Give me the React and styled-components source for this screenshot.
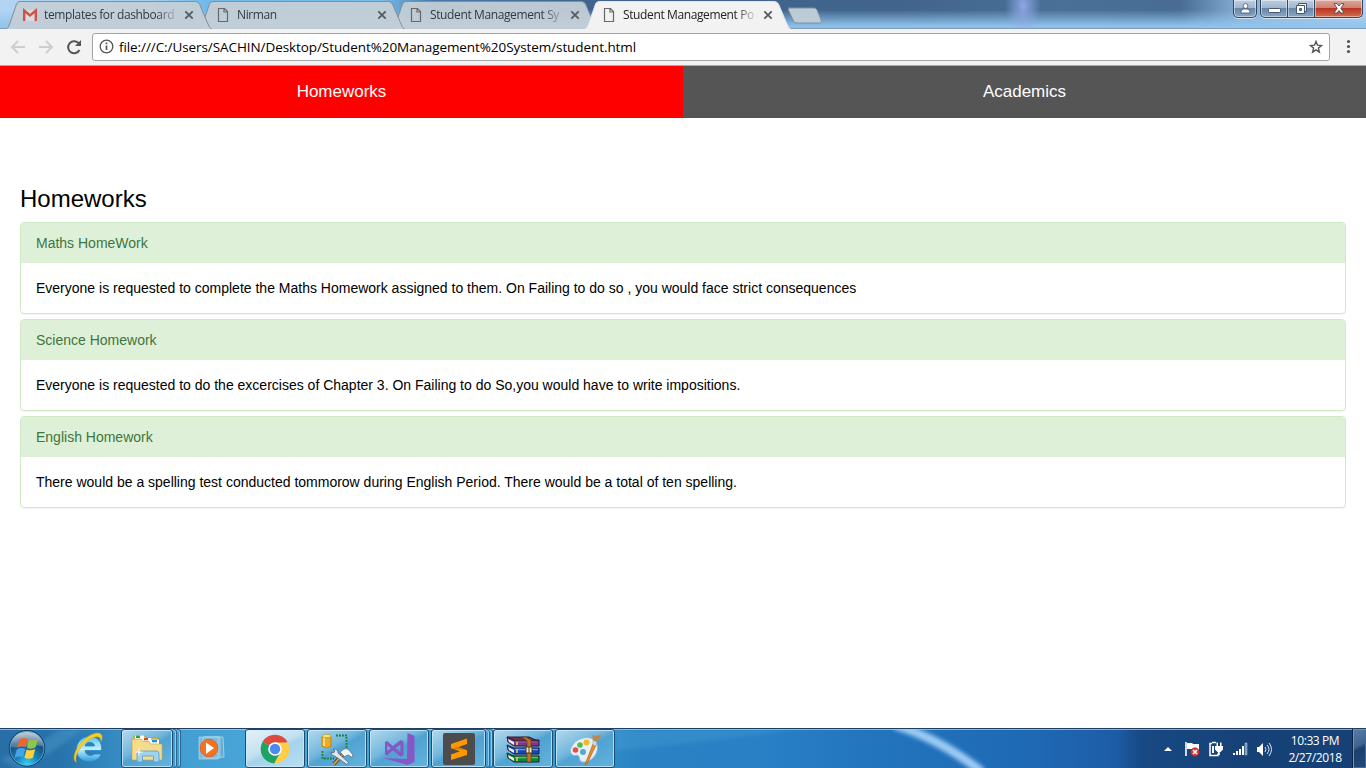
import React from "react";
import styled, { createGlobalStyle, css } from "styled-components";

const uiFont = '"Open Sans", "Noto Sans", sans-serif';

const GlobalStyle = createGlobalStyle`
  * { box-sizing: border-box; }
  body { margin: 0; background: #fff; overflow: hidden; }
`;

const Screen = styled.div`
  width: 1366px;
  height: 768px;
  display: flex;
  flex-direction: column;
  background: #fff;
  font-family: "Liberation Sans", Arial, sans-serif;
`;

/* ---------- Browser frame ---------- */

const TitleBar = styled.header`
  height: 29px;
  flex: none;
  display: flex;
  align-items: flex-start;
  padding-left: 5px;
  border-bottom: 1px solid #7f9cba;
  background:
    radial-gradient(ellipse 18px 32px at 1023px 6px, rgba(146, 170, 232, 0.95), transparent),
    linear-gradient(to bottom, transparent 35%, rgba(146, 196, 236, 0.95) 92%),
    linear-gradient(to right, #b3d4f2 0, #a3d0f4 150px, #72baeb 205px, #78bdec 380px, #4a7dab 430px, #3f658f 590px,
      #41648b 900px, #4a7098 1060px, #486c94 1180px, #86aed4 1240px, #b5d5ee 1366px);
`;

const TabItem = styled.div`
  position: relative;
  flex: none;
  width: 207px;
  height: ${(p) => (p.$active ? 29 : 28)}px;
  margin-right: -14px;
  padding: 1px 15px 0 17px;
  display: flex;
  align-items: center;
  z-index: ${(p) => p.$level};
`;

const TabShape = styled.svg`
  position: absolute;
  inset: 0;
  z-index: -1;
`;

const TabTitle = styled.span`
  width: 133px;
  margin-left: 6px;
  white-space: nowrap;
  font: 12px/18px ${uiFont};
  letter-spacing: -0.38px;
  color: ${(p) => (p.$active ? "#222" : "#303a44")};
  mask-image: linear-gradient(to right, #000 112px, rgba(0, 0, 0, 0.15) 132px);
`;

const TabIcon = styled.svg`
  flex: none;
  width: 16px;
  height: 16px;
`;

const CloseMark = styled.svg`
  flex: none;
  width: 10px;
  height: 10px;
  margin-left: 7px;
`;

const NewTab = styled.svg`
  flex: none;
  margin: 7px 0 0 10px;
`;

const WindowControls = styled.div`
  display: flex;
  margin-left: auto;
  padding-right: 3px;
  height: 19px;
`;

const ControlButton = styled.span`
  display: flex;
  flex: none;
  align-items: center;
  justify-content: center;
  width: ${(p) => p.$width}px;
  height: 18px;
  padding-bottom: ${(p) => p.$lift ?? 1}px;
  border: 1px solid #34475e;
  border-top: 0;
  border-left-width: ${(p) => (p.$joined ? 0 : 1)}px;
  border-radius: ${(p) => p.$radius || 0};
  margin-right: ${(p) => p.$gap || 0}px;
  box-shadow: inset 0 0 0 1px rgba(255, 255, 255, 0.45), 0 1px 0 rgba(255, 255, 255, 0.6);
  background: ${(p) =>
    p.$danger
      ? "linear-gradient(#dca89c 0, #cf8072 45%, #b93622 50%, #d56b50 100%)"
      : "linear-gradient(#bdcfe1 0, #9fb7cf 45%, #6887a8 50%, #89a8c8 100%)"};
`;

const Toolbar = styled.div`
  height: 37px;
  flex: none;
  display: flex;
  align-items: center;
  padding: 0 0 1px 9px;
  background: #f2f2f2;
  border-bottom: 1px solid #aaa;
`;

const NavIcon = styled.svg`
  flex: none;
  width: 18px;
  height: 18px;
  margin-right: 10px;
`;

const AddressBar = styled.div`
  display: flex;
  align-items: center;
  width: 1238px;
  height: 28px;
  margin-left: -1px;
  padding: 0 6px;
  background: #fff;
  border: 1px solid #a5a5a5;
  border-radius: 3px;
`;

const Address = styled.span`
  margin-left: 5px;
  flex: 1;
  white-space: nowrap;
  font: 13.5px/20px ${uiFont};
  letter-spacing: -0.08px;
  color: #000;
`;

const MenuDots = styled.svg`
  margin-left: 16px;
`;

/* ---------- Page ---------- */

const PageTabs = styled.nav`
  display: flex;
  flex: none;
  height: 52px;
`;

const PageTab = styled.button`
  flex: 1;
  border: 0;
  padding: 0;
  background: ${(p) => (p.$active ? "#ff0000" : "#555555")};
  color: #fff;
  font: 17px "Liberation Sans", Arial, sans-serif;
`;

const Content = styled.main`
  flex: 1;
  padding: 67px 20px 0;
  color: #000;
`;

const Heading = styled.h3`
  margin: 0 0 10px;
  font-size: 24px;
  font-weight: 400;
  line-height: 27px;
`;

const Panel = styled.section`
  margin-bottom: 5px;
  border: 1px solid #d0e9c6;
  border-radius: 4px;
  box-shadow: 0 1px 1px rgba(0, 0, 0, 0.05);
  font-size: 14px;
  line-height: 20px;
`;

const PanelHeading = styled.div`
  padding: 10px 15px;
  background: #dff0d8;
  color: #3c763d;
  border-radius: 3px 3px 0 0;
`;

const PanelBody = styled.div`
  padding: 15px;
`;

/* ---------- Taskbar ---------- */

const Taskbar = styled.footer`
  position: relative;
  z-index: 0;
  height: 40px;
  flex: none;
  display: flex;
  align-items: flex-start;
  border-top: 1px solid #203f60;
  box-shadow: inset 0 1px 0 rgba(160, 210, 245, 0.75);
  background: linear-gradient(to right, #286fa8 0, #2873ac 60px, #3489c0 110px, #44a0d3 190px, #4ba9da 300px,
    #3c9bd2 550px, #2a82c3 640px, #2980c5 760px, #2274bd 880px, #1f69b4 1030px, #1d5da7 1115px, #174983 1142px,
    #164176 1250px, #174176 1366px);
`;

const TaskbarGlow = styled.svg`
  position: absolute;
  inset: 0;
  z-index: -1;
`;

const StartOrb = styled.svg`
  flex: none;
  width: 40px;
  height: 39px;
  margin: 0 25px 0 7px;
`;

const iconBox = css`
  display: flex;
  align-items: center;
  justify-content: center;
`;

const QuickLaunch = styled.div`
  ${iconBox}
  width: ${(p) => p.$width}px;
  height: 38px;
  margin-right: ${(p) => p.$gap}px;
`;

const TaskButton = styled.div`
  ${iconBox}
  position: relative;
  flex: none;
  width: ${(p) => p.$width || 60}px;
  height: 39px;
  margin-right: ${(p) => p.$gap ?? 2}px;
  border: 1px solid #1e4c70;
  border-radius: 3px;
  box-shadow: inset 0 0 0 1px rgba(205, 234, 252, 0.8);
  background: ${(p) =>
    p.$active
      ? "linear-gradient(155deg, #e6f2f9 0, #c3e0f0 45%, #a5d2eb 55%, #b9dff2 100%)"
      : "linear-gradient(150deg, #b3d9ec 0, #72b7dd 42%, #50a2d1 52%, #64b3df 100%)"};
`;

const StackEdge = styled.span`
  width: 4px;
  height: 39px;
  flex: none;
  margin-left: ${(p) => p.$offset || 0}px;
  border: 1px solid #2c678d;
  border-left: 0;
  border-radius: 0 3px 3px 0;
  box-shadow: inset -1px 1px 0 rgba(190, 228, 248, 0.65);
`;

const Tray = styled.div`
  display: flex;
  align-items: center;
  height: 39px;
  margin-left: auto;
`;

const TrayIcon = styled.svg`
  flex: none;
  width: 16px;
  height: 16px;
  margin-right: ${(p) => p.$gap ?? 8}px;
`;

const Clock = styled.time`
  width: 66px;
  margin: 0 4px 0 8px;
  text-align: center;
  color: #fff;
  font: 12px/17px ${uiFont};
  letter-spacing: -0.4px;
  white-space: nowrap;
`;

const ShowDesktop = styled.span`
  width: 14px;
  height: 39px;
  border: 1px solid #0b2447;
  border-width: 0 0 0 1px;
  box-shadow: inset 1px 1px 0 #6f93b8, inset -1px -1px 0 #456b96;
  background: linear-gradient(155deg, #587da5 0, #3f6490 42%, #1b3f6c 52%, #214b7b 100%);
`;

/* ---------- Drawings ---------- */

const PageIcon = () => (
  <TabIcon viewBox="0 0 16 16">
    <path d="M3.5 1.500h6l3 3v10H3.500z M9 1.500v3.500h3.500" fill="none" stroke="#686868" strokeWidth="1.2" />
  </TabIcon>
);

const MailIcon = () => (
  <TabIcon viewBox="0 0 16 16">
    <path d="M1 3h14v11H1z" fill="#d8dcdf" />
    <path d="M2.2 14V3.5L8 8.4l5.8-4.9V14" fill="none" stroke="#cf5148" strokeWidth="2.4" />
  </TabIcon>
);

const BrowserTab = ({ title, active, level, mail }) => (
  <TabItem $active={active} $level={level}>
    <TabShape width="207" height="29">
      <path
        d="M0 29.5C3 28.5 4 26 5 23L11.5 4Q12.5 1.5 15 1.5H190.5Q193 1.5 194.5 4L202.5 23Q204.5 28.5 207 29.5Z"
        fill={active ? "#f2f2f2" : "#c3ced6"}
        fillOpacity={active ? 1 : 0.94}
        stroke={active ? "#dce5ec" : "#7f909d"}
      />
    </TabShape>
    {mail ? <MailIcon /> : <PageIcon />}
    <TabTitle $active={active}>{title}</TabTitle>
    <CloseMark viewBox="0 0 10 10">
      <path d="M1.3 1.3l7.4 7.4M8.7 1.3L1.3 8.7" stroke="#555d63" strokeWidth="1.8" />
    </CloseMark>
  </TabItem>
);

const Orb = () => (
  <StartOrb viewBox="0 0 40 39">
    <defs>
      <radialGradient id="orbFill" cx=".5" cy=".95" r=".9">
        <stop offset="0" stopColor="#35d4fb" />
        <stop offset=".35" stopColor="#1682bb" />
        <stop offset=".75" stopColor="#174c7b" />
        <stop offset="1" stopColor="#4a7596" />
      </radialGradient>
      <linearGradient id="orbGloss" x2="0" y2="1">
        <stop offset="0" stopColor="#fff" stopOpacity=".65" />
        <stop offset="1" stopColor="#fff" stopOpacity=".2" />
      </linearGradient>
    </defs>
    <circle cx="20" cy="19.3" r="17.8" fill="url(#orbFill)" stroke="#0c3a61" />
    <circle cx="20" cy="19.3" r="16.9" fill="none" stroke="#7bb5d7" strokeOpacity=".7" />
    <path d="M3.5 18C5 6 13 3 20 3s15 3 16.500 15C29 14 12 20 3.500 18Z" fill="url(#orbGloss)" />
    <path d="M12.5 10.300c3-2 5.500-1.600 8.300-.5l-2.200 8.400c-2.600-1.200-5-1.200-8.300.5z" fill="#ef6530" />
    <path d="M22 10.400c2.700 1.300 5.500 1.300 9-.6l-2.400 8.500c-3 1.800-5.600 1.600-8.600.4z" fill="#90c846" />
    <path d="M9.800 20.400c3-1.700 5.800-1.700 8.400-.4l-2.300 8.400c-2.500-1.300-5.300-1-8.300.6z" fill="#43a4e7" />
    <path d="M19.600 20.400c2.900 1.300 5.700 1.300 8.700-.4L26 28.400c-3 1.900-5.800 1.700-8.600.4z" fill="#ffd03c" />
  </StartOrb>
);

const ExplorerE = () => (
  <svg width="32" height="34" viewBox="0 0 32 34">
    <defs>
      <linearGradient id="ieBlue" x2="0" y2="1">
        <stop offset="0" stopColor="#5cc6f2" />
        <stop offset=".5" stopColor="#c2effd" />
        <stop offset="1" stopColor="#2a9bdd" />
      </linearGradient>
    </defs>
    <path d="M29 23C26.500 32.500 11 33.500 6 25 1.500 16 7.500 5.500 17.500 5.500c8.500 0 13 6 12 14H13c.5 5.500 7 6 9.200 3.500zM13 15h9.500c-.5-5-8.500-5-9.500 0z" fill="url(#ieBlue)" stroke="#2189c8" strokeWidth=".8" fillRule="evenodd" />
    <path d="M4.500 31.500C-3 27 8 8 21 3c8-3 11 1 8 8 .3-5-3-6.500-8.500-4C10 12 1.500 24 4.500 31.500Z" fill="#f9cf25" stroke="#cf9e12" strokeWidth=".5" />
  </svg>
);

const FolderIcon = () => (
  <svg width="34" height="32" viewBox="0 0 34 32">
    <path d="M4 3h11l2 2h12v20H3z" fill="#e3c262" stroke="#a98836" strokeWidth=".6" />
    <path d="M5 2.500h9v4H5z" fill="#fff" /><path d="M6 2.500h4V5H6z" fill="#22a94a" />
    <path d="M12 5h9v4h-9z" fill="#fff" /><path d="M14 5h4v2.300h-4z" fill="#d8472c" />
    <path d="M20 7h9v4h-9z" fill="#fff" /><path d="M22 7h5v2.300h-5z" fill="#2493dd" />
    <path d="M2 6h9l2 2.500h6l1.500 2.500H32v16H2z" fill="#f5dc8c" stroke="#c5a150" strokeWidth=".7" />
    <path d="M7 29v-8.500Q7 18 10 18h16q3 0 3 2.500V29h-5.500v-6h-11v6H7z" fill="#9ed3ef" stroke="#559cc4" strokeWidth=".8" />
    <path d="M9 14l.8 4.200 4.200.8-4.200 1L9 24l-.8-4L4 19l4.200-.8z" fill="#fff" fillOpacity=".8" />
  </svg>
);

const MediaIcon = () => (
  <svg width="30" height="28" viewBox="0 0 30 28">
    <path d="M7 3h18l1 20-19 1z" fill="#67abd0" stroke="#9bd0eb" />
    <path d="M5 3h17v21H5zM1 3h19v22H1z" fill="#83b9d8" stroke="#b8dff2" strokeWidth=".6" />
    <circle cx="11" cy="14" r="8.800" fill="#f27322" stroke="#dc5814" strokeWidth=".7" />
    <path d="M8 8.500l8 5.500-8 6z" fill="#fff" />
  </svg>
);

const ChromeIcon = () => (
  <svg width="30" height="30" viewBox="0 0 30 30">
    <path d="M15 15L2.560 7.800A14.400 14.400 0 0 1 27.440 7.800L21 15Z" fill="#dd4b3e" />
    <path d="M15 15L2.560 7.800A14.400 14.400 0 0 0 14.300 29.380L20 19Z" fill="#1ea362" />
    <path d="M15 8.500H27.800A14.400 14.400 0 0 1 14.300 29.380L20.800 18Z" fill="#ffcd46" />
    <circle cx="15" cy="15" r="6.800" fill="#fff" /><circle cx="15" cy="15" r="5.200" fill="#4a8af4" />
  </svg>
);

const DataToolsIcon = () => (
  <svg width="34" height="34" viewBox="0 0 34 34">
    <path d="M2 4v10.500q4.500 3 9 0V4z" fill="#e8ad25" stroke="#a87914" strokeWidth=".7" />
    <path d="M4 5v9" stroke="#ffe9a0" strokeWidth="1.500" />
    <ellipse cx="6.500" cy="4" rx="4.500" ry="1.700" fill="#ffe17a" stroke="#b28418" strokeWidth=".6" />
    <path d="M16 3.500h11M26.500 5v11M2.500 19v8M4 26.500h10" fill="none" stroke="#147d25" strokeWidth="1.800" strokeDasharray="1.800 1.200" />
    <path d="M14 32l9-10" stroke="#6d410f" strokeWidth="3.600" /><path d="M14 32l9-10" stroke="#eba13a" strokeWidth="1.800" />
    <path d="M20 20l4-3q3-1 5 1l4 5-1 2.500-3.500-2.500-4 1.500z" fill="#f0f4f7" stroke="#536777" strokeWidth=".7" />
    <path d="M13 17l2 2-1.500 2-2.500-1q0 4 4 4.200l12 8.300 1.500-2L18 21q.5-4-5-4z" fill="#dfe7ef" stroke="#455e76" strokeWidth=".7" />
  </svg>
);

const VisualStudioIcon = () => (
  <svg width="34" height="34" viewBox="0 0 34 34">
    <path d="M25.500 1l7 2.800V30l-7 3L1 26l24 1z" fill="#8459c5" />
    <path fillRule="evenodd" d="M3 10l2-1 6 5 7.500-6 3 1.500V23l-3 1.500-7.500-6-6 5-2-1zM5.500 13.500v5.500l3-2.700zM18.500 12.500l-5 3.800 5 3.900z" fill="#8459c5" />
  </svg>
);

const SublimeIcon = () => (
  <svg width="32" height="32" viewBox="0 0 32 32">
    <rect width="32" height="32" rx="2" fill="#4c4c4c" />
    <path d="M8 11L24 5.500V11l-9 3.200 9 3V22L8 27v-5.500l9-3.200-9-3z" fill="#ff9800" />
    <path d="M8 15.300l16 1.900-9-3z" fill="#d37800" />
  </svg>
);

const ArchiveIcon = () => (
  <svg width="34" height="28" viewBox="0 0 34 28">
    {[
      ["#80358c", "#c38acb", 2],
      ["#1745bc", "#679bf3", 10],
      ["#138530", "#51cf5d", 18],
    ].map(([dark, light, y]) => (
      <g key={y}>
        <path d={`M1 ${y}L8 ${y + 3}H33V${y + 9}H8L2 ${y + 5}Z`} fill={dark} stroke="#252136" />
        <path d={`M2 ${y + 2}L8 ${y + 5}V${y + 8}L3 ${y + 5}Z`} fill="#eee" />
        <path d={`M9 ${y + 4.500}H32`} stroke={light} strokeWidth="1.400" />
        <path d={`M11 ${y + 4}V${y + 8}`} stroke="#e6d052" strokeWidth="1.500" />
      </g>
    ))}
    <path d="M1 2h22l9 4H9z" fill="#6b304f" stroke="#341a2d" />
    <path d="M16 2l5 4v21h4V5l-5-3z" fill="#bb7327" stroke="#603610" strokeWidth=".6" />
    <path d="M20 12h6v6h-6z" fill="#f7e9a9" stroke="#4d3b26" /><path d="M23 12v6" stroke="#4d3b26" />
  </svg>
);

const PaintIcon = () => (
  <svg width="34" height="34" viewBox="0 0 34 34">
    <path d="M3 16C7 6 20 3 26 8c9 8-1 23-11 22-5 0-2-6-6-7-5 2-8-3-6-7z" fill="#e3f1f9" stroke="#8ebdd4" />
    <circle cx="15" cy="20" r="3" fill="#5ba6d0" />
    <circle cx="7.500" cy="18" r="2.800" fill="#e94f41" /><circle cx="12" cy="13" r="2.800" fill="#58b947" />
    <circle cx="18.500" cy="10.500" r="3" fill="#f4b82c" />
    <path d="M25 12l3 1-9 19-2 .5z" fill="#ee8b27" stroke="#ba6116" strokeWidth=".7" />
    <path d="M25 8l4 1-1 5-3-1z" fill="#d3dce2" stroke="#8396a1" strokeWidth=".5" />
    <path d="M24 3q5 2 9-1 0 6-5 8l-3-2z" fill="#b88957" />
  </svg>
);

const homework = [
  ["Maths HomeWork", "Everyone is requested to complete the Maths Homework assigned to them. On Failing to do so , you would face strict consequences"],
  ["Science Homework", "Everyone is requested to do the excercises of Chapter 3. On Failing to do So,you would have to write impositions."],
  ["English Homework", "There would be a spelling test conducted tommorow during English Period. There would be a total of ten spelling."],
];

export default function App() {
  return (
    <Screen>
      <GlobalStyle />
      <TitleBar>
        <BrowserTab title="templates for dashboard" level={3} mail />
        <BrowserTab title="Nirman" level={2} />
        <BrowserTab title="Student Management Sy" level={1} />
        <BrowserTab title="Student Management Po" level={4} active />
        <NewTab width="36" height="18">
          <path d="M1.500 1H27Q29 1 30 3L34.500 14Q35 16 32.500 16H10Q7.500 16 6.500 14L1.500 3Q.8 1 2.500 1Z" fill="#bdcbd6" stroke="#7f91a2" />
        </NewTab>
        <WindowControls>
          <ControlButton $width={24} $radius="0 0 5px 5px" $gap={3}>
            <svg width="11" height="11" viewBox="0 0 11 11"><circle cx="5.500" cy="3" r="2.400" fill="#fff" stroke="#48576c" strokeWidth=".8" /><path d="M1 10V8.500Q1.500 6 4 6h3q2.500 0 3 2.500V10Z" fill="#fff" stroke="#48576c" strokeWidth=".8" /></svg>
          </ControlButton>
          <ControlButton $width={28} $radius="0 0 0 5px">
            <svg width="13" height="12"><rect x=".5" y="6.500" width="12" height="4" rx="1" fill="#fff" stroke="#48576c" /></svg>
          </ControlButton>
          <ControlButton $width={27} $joined>
            <svg width="13" height="13"><path d="M3.500 1.500h8v8h-8z" fill="#eee" stroke="#48576c" /><path d="M1.500 3.500h8v8h-8z" fill="#fff" stroke="#48576c" /><path d="M4.500 6.500h2v2h-2z" fill="#7790aa" stroke="#48576c" /></svg>
          </ControlButton>
          <ControlButton $width={48} $radius="0 0 5px 0" $joined $danger>
            <svg width="12" height="11" viewBox="0 0 12 11"><path d="M1 .7h3L6 3 8 .7h3L7.800 5.300 11 10H8L6 7.500 4 10H1l3.200-4.700z" fill="#fff" stroke="#4f4654" strokeWidth=".9" /></svg>
          </ControlButton>
        </WindowControls>
      </TitleBar>
      <Toolbar>
        <NavIcon viewBox="0 0 18 18"><path d="M16 9H3M9 3L3 9l6 6" fill="none" stroke="#cecece" strokeWidth="1.900" /></NavIcon>
        <NavIcon viewBox="0 0 18 18"><path d="M2 9h13M9 3l6 6-6 6" fill="none" stroke="#cecece" strokeWidth="1.900" /></NavIcon>
        <NavIcon viewBox="0 0 18 18"><path d="M14.500 12A6 6 0 1 1 13.200 4.800L15 6.500" fill="none" stroke="#555" strokeWidth="2" /><path d="M16 2v6h-6z" fill="#555" /></NavIcon>
        <AddressBar>
          <svg width="15" height="15" viewBox="0 0 15 15"><circle cx="7.500" cy="7.500" r="6.300" fill="none" stroke="#555" strokeWidth="1.300" /><path d="M7.500 6.500v4.500M7.500 3.500v1.800" stroke="#555" strokeWidth="1.700" /></svg>
          <Address>file:///C:/Users/SACHIN/Desktop/Student%20Management%20System/student.html</Address>
          <svg width="14" height="14" viewBox="0 0 14 14"><path d="M7 1.500L8.500 5.200l4 .3-3.100 2.600 1 4L7 9.900l-3.400 2.200 1-4L1.500 5.500l4-.3z" fill="none" stroke="#555" strokeWidth="1.400" /></svg>
        </AddressBar>
        <MenuDots width="5" height="15"><circle cx="2.500" cy="2.500" r="1.600" fill="#555" /><circle cx="2.500" cy="7.500" r="1.600" fill="#555" /><circle cx="2.500" cy="12.500" r="1.600" fill="#555" /></MenuDots>
      </Toolbar>
      <PageTabs>
        <PageTab $active>Homeworks</PageTab>
        <PageTab>Academics</PageTab>
      </PageTabs>
      <Content>
        <Heading>Homeworks</Heading>
        {homework.map(([title, text]) => (
          <Panel key={title}>
            <PanelHeading>{title}</PanelHeading>
            <PanelBody>{text}</PanelBody>
          </Panel>
        ))}
      </Content>
      <Taskbar>
        <TaskbarGlow width="1366" height="39">
          <defs><filter id="soften"><feGaussianBlur stdDeviation="2" /></filter></defs>
          <path d="M895-4Q940 10 982 43" fill="none" stroke="#9bcbf4" strokeWidth="9" filter="url(#soften)" />
          <path d="M20 40Q60 20 82 0H60Q35 20 0 30Z" fill="#6cb8df" opacity=".25" filter="url(#soften)" />
          <path d="M615 22Q710 12 800 0H615Z" fill="#66bae7" opacity=".18" filter="url(#soften)" />
        </TaskbarGlow>
        <Orb />
        <QuickLaunch $width={32} $gap={17}><ExplorerE /></QuickLaunch>
        <TaskButton $width={52} $gap={0}><FolderIcon /></TaskButton>
        <StackEdge /><StackEdge />
        <QuickLaunch $width={64} $gap={0}><MediaIcon /></QuickLaunch>
        <TaskButton $active><ChromeIcon /></TaskButton>
        <TaskButton><DataToolsIcon /></TaskButton>
        <TaskButton><VisualStudioIcon /></TaskButton>
        <TaskButton $width={55} $gap={0}><SublimeIcon /></TaskButton>
        <StackEdge /><StackEdge $offset={-1} />
        <TaskButton><ArchiveIcon /></TaskButton>
        <TaskButton><PaintIcon /></TaskButton>
        <Tray>
          <TrayIcon viewBox="0 0 16 16"><path d="M4 10l4-4 4 4z" fill="#fff" /></TrayIcon>
          <TrayIcon viewBox="0 0 16 16"><path d="M2 1v14" stroke="#fff" strokeWidth="1.600" /><path d="M3 2h5l1 1h6v6H9L8 8H3z" fill="#fff" /><circle cx="11" cy="11" r="4.300" fill="#d83b32" stroke="#a31f1d" strokeWidth=".5" /><path d="M9 9l4 4m0-4l-4 4" stroke="#fff" strokeWidth="1.500" /></TrayIcon>
          <TrayIcon viewBox="0 0 16 16"><path d="M4 2.500H2v12h8v-2M4 1.500h4" fill="none" stroke="#fff" strokeWidth="1.500" /><path d="M7 5h8v3.500l-2.500 2.500h-3L7 8.500zM8.500 1.500H10V5H8.500zM12 1.500h1.500V5H12zM10 11h1.800v3H10zM4 5h2v7H4z" fill="#fff" /></TrayIcon>
          <TrayIcon viewBox="0 0 16 16"><path d="M1 12h2v2H1zM4 10h2v4H4zM7 8h2v6H7zM10 5h2v9h-2z" fill="#fff" /><path d="M13 2h2v12h-2z" fill="#7092b4" stroke="#bdd1e2" strokeWidth=".5" /></TrayIcon>
          <TrayIcon viewBox="0 0 16 16" $gap={2}><path d="M1 6h2l4-4v13l-4-4H1z" fill="#fff" /><path d="M9 6q2 2 0 5M11 4q4 4 0 9M13 2q5 6 0 13" fill="none" stroke="#d9e5ef" strokeWidth="1" /></TrayIcon>
          <Clock>10:33 PM<br />2/27/2018</Clock>
          <ShowDesktop />
        </Tray>
      </Taskbar>
    </Screen>
  );
}
